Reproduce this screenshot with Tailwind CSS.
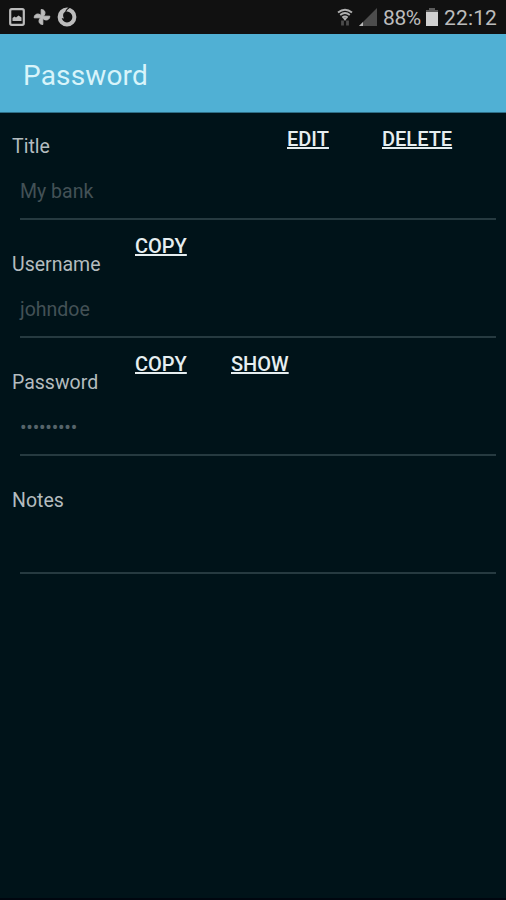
<!DOCTYPE html>
<html lang="en">
  <head>
    <meta charset="UTF-8" />
    <meta name="viewport" content="width=device-width, initial-scale=1.0" />
    <title>Password</title>
    <script src="https://cdn.jsdelivr.net/npm/@tailwindcss/browser@4"></script>
  </head>

  <body class="bg-[#001319] font-[Roboto,sans-serif] text-[#b4bcbf]">
    <div class="flex flex-col h-[900px] overflow-hidden border-b-2 border-[#00060f]">
      <!-- status bar -->
      <div class="flex items-center h-[34px] shrink-0 bg-[#111111] pl-[9px] pr-2 text-[#bcbcbc]">
        <svg class="w-4 h-[18px]" viewBox="0 0 16 18" fill="none">
          <rect x="1.2" y="1.2" width="13.6" height="15.6" rx="1.5" stroke="currentColor" stroke-width="2.2" />
          <path d="M3.500 13V10l2-1.500 1.500 1L9.500 7.500l3 2V13z" fill="currentColor" />
        </svg>
        <svg class="w-[18px] h-[18px] ml-2" viewBox="0 0 18 18" fill="currentColor">
          <g stroke="currentColor" stroke-width="1" stroke-linejoin="round">
            <path d="M8.200 9V1.500c3.500 0 4.500 3 3.200 5.500L9.500 9z" />
            <path d="M9 8.200h7.800c0 3.500-3.300 4.500-5.800 3.200L9 9.500z" />
            <path d="M9.800 9v7.500c-3.500 0-4.500-3-3.200-5.500L8.500 9z" />
            <path d="M9 9.800H1.200c0-3.500 3.300-4.500 5.800-3.200L9 8.500z" />
          </g>
        </svg>
        <svg class="w-5 h-5 ml-[6px]" viewBox="0 0 20 20" fill="none">
          <circle cx="10" cy="10" r="7.400" stroke="currentColor" stroke-width="4" />
          <path d="M7.500 4.500C5.800 6.500 5.600 9.500 7 11.500L4 11V6z" fill="currentColor" />
          <path d="M12.200.8C10 2 8.700 3.800 8.600 6.200" stroke="#111111" stroke-width="1.100" />
        </svg>

        <div class="flex items-center ml-auto">
          <svg class="w-[18px] h-[18px]" viewBox="0 0 18 18" fill="none">
            <path d="M2 4.500q7-5.500 14 0M4.200 7q4.800-3.800 9.600 0M6.300 9.500q2.700-2 5.400 0" stroke="#b0b0b0" stroke-width="1.900" />
            <path d="M6.500 9.500h5L9 13z" fill="#b0b0b0" />
            <path d="M6.500 12.500v5M11.500 12.500v5" stroke="#4c4c4c" stroke-width="2.800" />
          </svg>
          <svg class="w-[18px] h-[18px] ml-[5px]" viewBox="0 0 18 18">
            <path d="M18 0v18H0z" fill="#4c4c4c" />
            <path d="M4 14v4H0z" fill="#b8b8b8" />
          </svg>
          <span class="ml-[6px] w-10 pt-px text-[21px] leading-[34px] tracking-[-0.4px] whitespace-nowrap">88%</span>
          <svg class="w-3 h-[18px] ml-[3px]" viewBox="0 0 12 18">
            <path d="M3 0h6v2H3z" fill="#5c5c5c" />
            <path d="M0 2h12v2H0z" fill="#5c5c5c" />
            <path d="M0 4h12v14H0z" fill="#d0d0d0" />
          </svg>
          <span class="ml-[6px] w-[54px] pt-px text-[21px] leading-[34px] tracking-[0.15px] whitespace-nowrap">22:12</span>
        </div>
      </div>

      <header class="flex items-center h-[79px] shrink-0 bg-[#50b0d4] px-[23px] pt-[5px] border-b border-[#2f6f88]">
        <h1 class="text-[28px] leading-8 tracking-[0.15px] text-[#d8f4fa]">Password</h1>
      </header>

      <main class="flex flex-col">
        <section class="flex flex-col h-[107px] pl-3 pr-[10px]">
          <div class="flex items-start h-[60px]">
            <label class="w-[275px] pt-[22px] text-[19.5px] leading-6">Title</label>
            <button class="mt-[14px] w-[95px] text-left text-[20px] leading-6 font-medium underline text-[#e6eef0]">EDIT</button>
            <button class="mt-[14px] text-left text-[20px] leading-6 font-medium underline text-[#e6eef0]">DELETE</button>
          </div>
          <div class="flex-1 ml-2 pt-[7px] border-b-2 border-[#263a40] text-[19.5px] leading-6 text-[#435156]">My bank</div>
        </section>

        <section class="flex flex-col h-[118px] pl-3 pr-[10px]">
          <div class="flex items-start h-[71px]">
            <label class="w-[123px] pt-[33px] text-[19.5px] leading-6">Username</label>
            <button class="mt-[14px] text-left text-[20px] leading-6 font-medium underline text-[#e6eef0]">COPY</button>
          </div>
          <div class="flex-1 ml-2 pt-[7px] border-b-2 border-[#263a40] text-[19.5px] leading-6 text-[#435156]">johndoe</div>
        </section>

        <section class="flex flex-col h-[118px] pl-3 pr-[10px]">
          <div class="flex items-start h-[71px]">
            <label class="w-[123px] pt-[33px] text-[19.5px] leading-6">Password</label>
            <button class="mt-[14px] w-24 text-left text-[20px] leading-6 font-medium underline text-[#e6eef0]">COPY</button>
            <button class="mt-[14px] text-left text-[20px] leading-6 font-medium underline text-[#e6eef0]">SHOW</button>
          </div>
          <div class="flex-1 ml-2 pt-[7px] border-b-2 border-[#263a40] text-[19.5px] leading-6 tracking-[-0.25px] text-[#56646a]">•••••••••</div>
        </section>

        <section class="flex flex-col h-[118px] pl-3 pr-[10px]">
          <div class="flex items-start h-[71px]">
            <label class="pt-[33px] text-[19.5px] leading-6">Notes</label>
          </div>
          <div class="flex-1 ml-2 border-b-2 border-[#263a40]"></div>
        </section>
      </main>
    </div>
  </body>
</html>
